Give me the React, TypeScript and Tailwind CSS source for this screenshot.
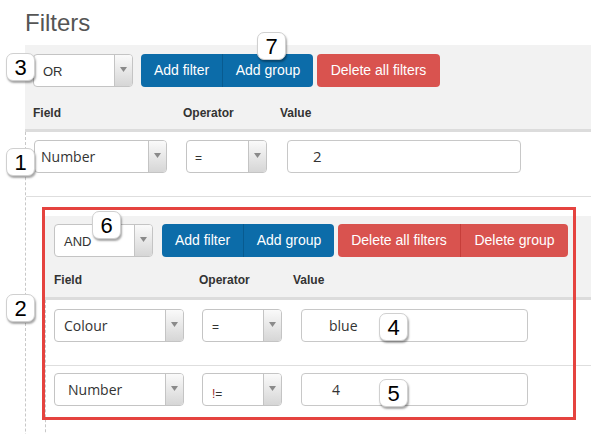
import React from 'react';

const SANS = "font-['Liberation_Sans',Arial,sans-serif]";
const OPEN = "font-['Open_Sans','Liberation_Sans',sans-serif]";

function Select({ width, label, textClass, pad }: { width: string; label: React.ReactNode; textClass: string; pad: string }) {
  return (
    <div className={`flex h-[33px] ${width} shrink-0 overflow-hidden rounded-[4px] border border-[#c4c4c4] bg-white`}>
      <div className={`flex flex-1 items-center ${pad} ${textClass} text-[#333]`}>{label}</div>
      <div className="flex w-[18px] justify-center border-l border-[#c4c4c4] bg-gradient-to-b from-[#fafafa] to-[#d6d6d6] pt-[12px]">
        <svg width="7" height="5" viewBox="0 0 7 5">
          <path d="M0 0 H7 L3.5 5 Z" fill="#8a8a8a" />
        </svg>
      </div>
    </div>
  );
}

function ValueInput({ width, value, pad }: { width: string; value: string; pad: string }) {
  return (
    <div className={`flex h-[33px] ${width} shrink-0 items-center rounded-[4px] border border-[#c8c8c8] bg-white ${pad} ${OPEN} text-[#333]`}>
      {value}
    </div>
  );
}

function Btn({ children, color, extra }: { children: React.ReactNode; color: 'blue' | 'red'; extra: string }) {
  const c = color === 'blue' ? 'bg-[#0c6ca9] border-[#085b90]' : 'bg-[#d9534f] border-[#c63e3a]';
  return (
    <div className={`flex h-[33px] items-center justify-center text-[14px] text-white ${c} ${extra}`}>{children}</div>
  );
}

function Badge({ n, className }: { n: string; className: string }) {
  return (
    <div
      className={`absolute flex h-[28px] w-[29px] items-center justify-center rounded-[7px] border border-[#d0d0d0] bg-white pt-[1px] text-[22px] leading-none text-black shadow-[1px_2px_2px_rgba(0,0,0,0.35)] ${SANS} ${className}`}
    >
      {n}
    </div>
  );
}

export default function App() {
  return (
    <div className={`relative h-[434px] w-[591px] overflow-hidden bg-white ${SANS}`}>
      <h1 className="h-[45px] pl-[25px] pt-[8px] text-[24px] leading-[30px] text-[#555]">Filters</h1>

      {/* outer group */}
      <div className="ml-[25px]">
        <div className="h-[87px] border-b-[3px] border-[#dcdcdc] bg-[#f2f2f2] pl-[8px] pt-[9px]">
          <div className="flex items-center">
            <Select width="w-[100px]" label="OR" textClass="text-[13px]" pad="pl-[9px] pt-[2px]" />
            <div className="ml-[8px] flex">
              <Btn color="blue" extra="w-[81px] rounded-l-[4px]">Add filter</Btn>
              <Btn color="blue" extra="w-[91px] rounded-r-[4px] border-l">Add group</Btn>
            </div>
            <Btn color="red" extra="ml-[4px] w-[123px] rounded-[4px]">Delete all filters</Btn>
          </div>
          <div className="mt-[19px] flex text-[12px] font-bold leading-[14px] text-[#333]">
            <div className="w-[150px]">Field</div>
            <div className="w-[97px]">Operator</div>
            <div>Value</div>
          </div>
        </div>

        <div className="border-l border-dashed border-[#c8c8c8] pb-[40px]">
          <div className="flex h-[65px] border-b border-[#dedede] pl-[8px] pt-[8px]">
            <Select width="w-[133px]" label="Number" textClass={`${OPEN} text-[14px]`} pad="pl-[6px]" />
            <div className="ml-[19px]">
              <Select width="w-[81px]" label="=" textClass="text-[12px]" pad="pl-[8px] pt-[3px]" />
            </div>
            <div className="ml-[20px]">
              <ValueInput width="w-[234px]" value="2" pad="pl-[25px] text-[15px]" />
            </div>
          </div>

          {/* nested group */}
          <div className="ml-[19px] mt-[19px]">
            <div className="h-[84px] border-b-[3px] border-[#dcdcdc] bg-[#f2f2f2] pl-[9px] pt-[8px]">
              <div className="flex items-center">
                <Select width="w-[99px]" label="AND" textClass="text-[13px]" pad="pl-[9px] pt-[2px]" />
                <div className="ml-[9px] flex">
                  <Btn color="blue" extra="w-[81px] rounded-l-[4px]">Add filter</Btn>
                  <Btn color="blue" extra="w-[91px] rounded-r-[4px] border-l">Add group</Btn>
                </div>
                <div className="ml-[4px] flex">
                  <Btn color="red" extra="w-[122px] rounded-l-[4px]">Delete all filters</Btn>
                  <Btn color="red" extra="w-[108px] rounded-r-[4px] border-l">Delete group</Btn>
                </div>
              </div>
              <div className="mt-[16px] flex text-[12px] font-bold leading-[14px] text-[#333]">
                <div className="w-[145px]">Field</div>
                <div className="w-[94px]">Operator</div>
                <div>Value</div>
              </div>
            </div>

            <div className="border-l border-dashed border-[#c8c8c8] pb-[40px]">
              <div className="flex h-[66px] border-b border-[#dedede] pl-[8px] pt-[9px]">
                <Select width="w-[130px]" label="Colour" textClass={`${OPEN} text-[14px]`} pad="pl-[9px]" />
                <div className="ml-[18px]">
                  <Select width="w-[80px]" label="=" textClass="text-[12px]" pad="pl-[9px] pt-[3px]" />
                </div>
                <div className="ml-[19px]">
                  <ValueInput width="w-[227px]" value="blue" pad="pl-[27px] text-[14px]" />
                </div>
              </div>
              <div className="flex h-[66px] pl-[8px] pt-[7px]">
                <Select width="w-[130px]" label="Number" textClass={`${OPEN} text-[14px]`} pad="pl-[13px]" />
                <div className="ml-[18px]">
                  <Select
                    width="w-[80px]"
                    label={
                      <span>
                        <span className="text-[#9a2a2a]">!</span>=
                      </span>
                    }
                    textClass="text-[12px]"
                    pad="pl-[9px] pt-[8px]"
                  />
                </div>
                <div className="ml-[19px]">
                  <ValueInput width="w-[227px]" value="4" pad="pl-[30px] text-[14px]" />
                </div>
              </div>
            </div>
          </div>
        </div>
      </div>

      {/* annotations */}
      <div className="absolute left-[42px] top-[207px] h-[213px] w-[534px] border-[3px] border-[#e5433f]" />
      <Badge n="3" className="left-[6px] top-[53px]" />
      <Badge n="7" className="left-[257px] top-[32px]" />
      <Badge n="1" className="left-[6px] top-[148px]" />
      <Badge n="2" className="left-[6px] top-[294px]" />
      <Badge n="6" className="left-[92px] top-[211px]" />
      <Badge n="4" className="left-[379px] top-[313px]" />
      <Badge n="5" className="left-[379px] top-[379px]" />
    </div>
  );
}
